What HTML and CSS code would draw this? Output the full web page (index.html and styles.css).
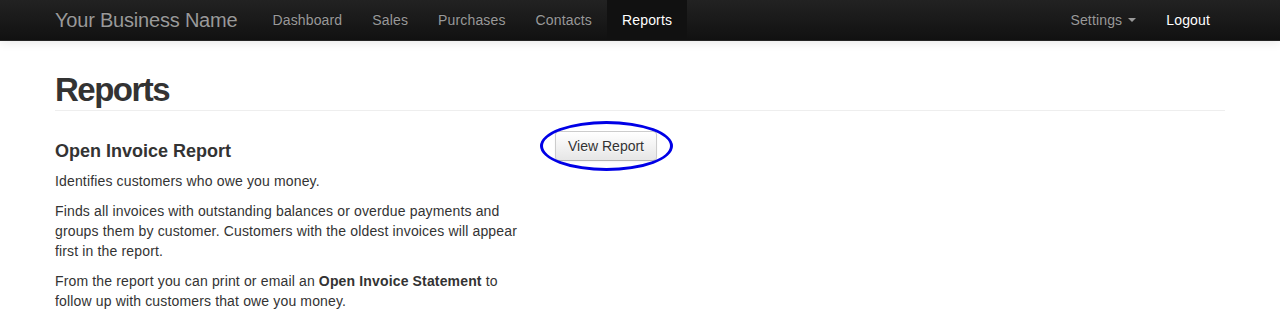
FILE: index.html
```html
<!DOCTYPE html>
<html lang="en">
<head>
<meta charset="utf-8">
<title>Reports</title>
<link rel="stylesheet" href="styles.css">
</head>
<body>
<div class="navbar">
  <div class="container nav-inner">
    <a class="brand" href="#">Your Business Name</a>
    <ul class="nav">
      <li><a href="#">Dashboard</a></li>
      <li><a href="#">Sales</a></li>
      <li><a href="#">Purchases</a></li>
      <li><a href="#">Contacts</a></li>
      <li class="active"><a href="#">Reports</a></li>
    </ul>
    <ul class="nav nav-right">
      <li><a href="#">Settings <b class="caret"></b></a></li>
      <li class="logout"><a href="#">Logout</a></li>
    </ul>
  </div>
</div>
<div class="container main">
  <div class="page-header">
    <h1>Reports</h1>
  </div>
  <div class="row">
    <div class="span5">
      <h2>Open Invoice Report</h2>
      <p>Identifies customers who owe you money.</p>
      <p>Finds all invoices with outstanding balances or overdue payments and groups them by customer. Customers with the oldest invoices will appear first in the report.</p>
      <p>From the report you can print or email an <strong>Open Invoice Statement</strong> to follow up with customers that owe you money.</p>
    </div>
    <div class="span7">
      <span class="btn-wrap">
        <a class="btn" href="#">View Report</a>
        <span class="highlight"></span>
      </span>
    </div>
  </div>
</div>
</body>
</html>
```
FILE: styles.css
```css
* { box-sizing: border-box; }
html, body { margin: 0; padding: 0; }
body {
  font-family: "Liberation Sans", Arial, Helvetica, sans-serif;
  font-size: 14px;
  line-height: 20px;
  color: #333;
  background: #fff;
}
a { text-decoration: none; }
.container { width: 1170px; margin: 0 auto; }

.navbar {
  height: 41px;
  background: linear-gradient(to bottom, #222 0%, #111 100%);
  border-bottom: 1px solid #252525;
  box-shadow: 0 1px 10px rgba(0,0,0,0.1);
}
.nav-inner { display: flex; align-items: flex-start; height: 40px; }
.brand {
  display: block;
  margin-left: -20px;
  padding: 10px 20px;
  font-size: 20px;
  line-height: 20px;
  letter-spacing: -0.2px;
  color: #999;
  text-shadow: 0 -1px 0 rgba(0,0,0,0.25);
}
.nav { display: flex; list-style: none; margin: 0; padding: 0; }
.nav-right { margin-left: auto; }
.nav li a {
  display: block;
  padding: 10px 15px;
  line-height: 20px;
  letter-spacing: 0.15px;
  color: #999;
  text-shadow: 0 -1px 0 rgba(0,0,0,0.25);
}
.nav li.active a { background: #111; color: #fff; }
.nav li.logout a { color: #fff; }
.caret {
  display: inline-block;
  width: 0; height: 0;
  vertical-align: top;
  margin-top: 8px;
  margin-left: 2px;
  border-top: 4px solid #999;
  border-left: 4px solid transparent;
  border-right: 4px solid transparent;
}

.main { padding-top: 29px; }
.page-header {
  border-bottom: 1px solid #eee;
  margin-bottom: 20px;
}
.page-header h1 {
  margin: 0;
  font-size: 33px;
  line-height: 40px;
  letter-spacing: -1.5px;
  font-weight: bold;
}
.row { display: flex; gap: 30px; }
.span5 { width: 470px; }
.span7 { width: 670px; }
h2 {
  margin: 10px 0;
  font-size: 18px;
  line-height: 20px;
  font-weight: bold;
}
p { margin: 0 0 10px; letter-spacing: 0.15px; }

.btn-wrap { position: relative; display: inline-block; }
.btn {
  display: inline-block;
  padding: 4px 12px;
  font-size: 14px;
  line-height: 20px;
  color: #333;
  text-shadow: 0 1px 1px rgba(255,255,255,0.75);
  background: linear-gradient(to bottom, #fff, #e6e6e6);
  border: 1px solid #ccc;
  border-bottom-color: #b3b3b3;
  border-radius: 4px;
  box-shadow: inset 0 1px 0 rgba(255,255,255,0.2), 0 1px 2px rgba(0,0,0,0.05);
}
.highlight {
  position: absolute;
  left: -15px;
  top: -10px;
  width: 133px;
  height: 50px;
  border: 3px solid #0000e6;
  border-radius: 50%;
  pointer-events: none;
}
```
